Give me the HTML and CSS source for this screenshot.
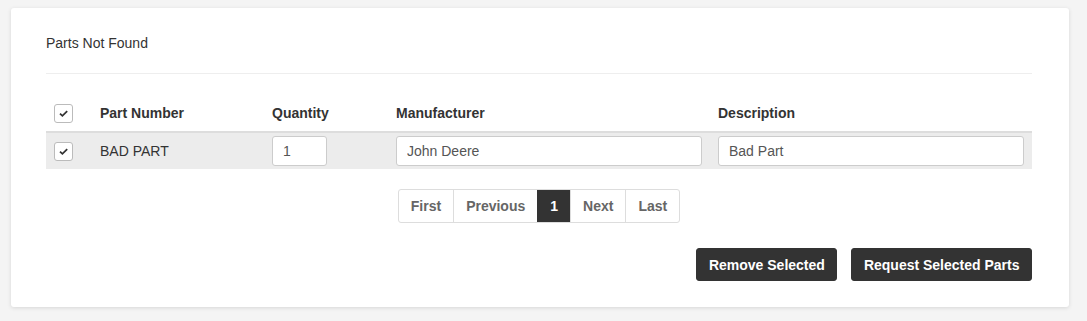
FILE: index.html
```html
<!DOCTYPE html>
<html>
<head lang="en">
    <meta charset="UTF-8">
    <title>Parts Not Found</title>
    <link rel="stylesheet" href="styles.css">
</head>
<body>
    <div class="card">
        <div class="card-title">Parts Not Found</div>
        <hr class="divider">
        <table class="parts">
            <colgroup>
                <col class="c-check">
                <col class="c-part">
                <col class="c-qty">
                <col class="c-man">
                <col class="c-desc">
            </colgroup>
            <thead>
                <tr>
                    <th><span class="check"><svg width="11" height="9" viewBox="0 0 11 9"><polyline points="2,4.6 4.4,6.8 9.2,2.2" fill="none" stroke="#333" stroke-width="1.8"/></svg></span></th>
                    <th>Part Number</th>
                    <th>Quantity</th>
                    <th>Manufacturer</th>
                    <th>Description</th>
                </tr>
            </thead>
            <tbody>
                <tr>
                    <td><span class="check"><svg width="11" height="9" viewBox="0 0 11 9"><polyline points="2,4.6 4.4,6.8 9.2,2.2" fill="none" stroke="#333" stroke-width="1.8"/></svg></span></td>
                    <td>BAD PART</td>
                    <td><input class="field qty" type="text" value="1"></td>
                    <td><input class="field" type="text" value="John Deere"></td>
                    <td><input class="field" type="text" value="Bad Part"></td>
                </tr>
            </tbody>
        </table>
        <div class="pager-wrap">
            <ul class="pager">
                <li>First</li>
                <li>Previous</li>
                <li class="active">1</li>
                <li>Next</li>
                <li>Last</li>
            </ul>
        </div>
        <div class="actions">
            <button class="btn">Remove Selected</button>
            <button class="btn">Request Selected Parts</button>
        </div>
    </div>
</body>
</html>
```

FILE: styles.css
```css
* {
    margin: 0;
    padding: 0;
    box-sizing: border-box;
}
html,body {
    background: #f4f4f4;
}
body {
    font-family: "Liberation Sans", Arial, sans-serif;
    font-size: 14px;
    line-height: 20px;
    color: #333;
    padding: 8px 18px 14px 11px;
}
.card {
    background: #fff;
    border-radius: 3px;
    box-shadow: 0 1px 4px rgba(0,0,0,0.12);
    padding: 25px 37px 26px 35px;
}
.card-title {
    color: #333;
}
.divider {
    border: 0;
    border-top: 1px solid #eee;
    margin: 20px 0 20px;
}
.parts {
    width: 100%;
    table-layout: fixed;
    border-collapse: collapse;
}
.c-check { width: 46px; }
.c-part { width: 172px; }
.c-qty { width: 124px; }
.c-man { width: 322px; }
.c-desc { width: 322px; }
.parts th {
    text-align: left;
    font-weight: bold;
    padding: 9px 8px 8px;
    border-bottom: 2px solid #ddd;
    vertical-align: middle;
}
.parts td {
    padding: 3px 8px;
    height: 37px;
    background: #ececec;
    vertical-align: middle;
}
.check {
    display: flex;
    align-items: center;
    justify-content: center;
    width: 19px;
    height: 19px;
    border: 1px solid #bbb;
    border-radius: 3px;
    background: #fff;
}
.field {
    display: block;
    width: 100%;
    height: 30px;
    border: 1px solid #ccc;
    border-radius: 3px;
    padding: 0 10px;
    font-family: "Liberation Sans", Arial, sans-serif;
    font-size: 14px;
    color: #555;
    background: #fff;
}
.field.qty {
    width: 55px;
}
.pager-wrap {
    display: flex;
    justify-content: center;
    margin-top: 20px;
}
.pager {
    list-style: none;
    display: flex;
    border: 1px solid #ddd;
    border-radius: 3px;
    overflow: hidden;
}
.pager li {
    height: 32px;
    line-height: 32px;
    padding: 0 12px;
    font-weight: bold;
    color: #666;
    border-left: 1px solid #ddd;
}
.pager li:first-child {
    border-left: 0;
}
.pager li.active {
    background: #333;
    color: #fff;
    border-left-color: #333;
}
.actions {
    display: flex;
    justify-content: flex-end;
    gap: 14px;
    margin-top: 25px;
}
.btn {
    height: 33px;
    padding: 0 11.5px;
    border: 1px solid #333;
    border-radius: 3px;
    background: #333;
    color: #fff;
    font-family: "Liberation Sans", Arial, sans-serif;
    font-size: 14px;
    font-weight: bold;
}
```
